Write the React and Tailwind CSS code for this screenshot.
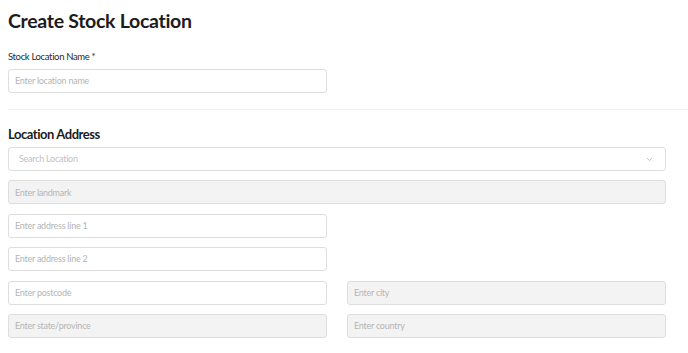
import React from "react";

const font = { fontFamily: "Lato, 'Noto Sans', sans-serif" };

function Input({ placeholder, disabled }) {
  return (
    <div
      className={`h-6 w-full rounded-[3px] border border-[#dedede] px-[6px] flex items-center text-[9px] tracking-[-0.25px] text-[#b5b5b5] ${
        disabled ? "bg-[#f3f3f3]" : "bg-white"
      }`}
    >
      {placeholder}
    </div>
  );
}

export default function App() {
  return (
    <div className="w-[688px] h-[353px] bg-white overflow-hidden" style={font}>
      <div className="pl-2 pt-[10px]">
        <h1 className="text-[19.5px] leading-[22px] font-bold text-[#1c1c1c] tracking-[-0.3px]">
          Create Stock Location
        </h1>
        <div className="mt-[19px] text-[9.5px] leading-[12px] tracking-[-0.35px] text-[#2a2a2a]">
          Stock Location Name *
        </div>
        <div className="mt-[6px] w-[319px]">
          <Input placeholder="Enter location name" />
        </div>
        <div className="mt-4 h-px bg-[#efefef]" />
        <h2 className="mt-[16px] text-[13px] leading-[16px] font-bold tracking-[-0.45px] text-[#1c1c1c]">
          Location Address
        </h2>
        <div className="mt-[5px] w-[658px] flex flex-col gap-[9.4px]">
          <div className="h-6 w-full rounded-[3px] border border-[#dedede] bg-white pl-[10px] pr-[12px] flex items-center justify-between text-[9px] tracking-[-0.25px] text-[#c2c2c2]">
            <span>Search Location</span>
            <svg width="7" height="5" viewBox="0 0 7 5" fill="none">
              <path d="M1 1.2L3.5 3.6L6 1.2" stroke="#b8b8b8" strokeWidth="0.9" />
            </svg>
          </div>
          <Input placeholder="Enter landmark" disabled />
          <div className="grid grid-cols-2 gap-x-5 gap-y-[9.4px]">
            <Input placeholder="Enter address line 1" />
            <div />
            <Input placeholder="Enter address line 2" />
            <div />
            <Input placeholder="Enter postcode" />
            <Input placeholder="Enter city" disabled />
            <Input placeholder="Enter state/province" disabled />
            <Input placeholder="Enter country" disabled />
          </div>
        </div>
      </div>
    </div>
  );
}
